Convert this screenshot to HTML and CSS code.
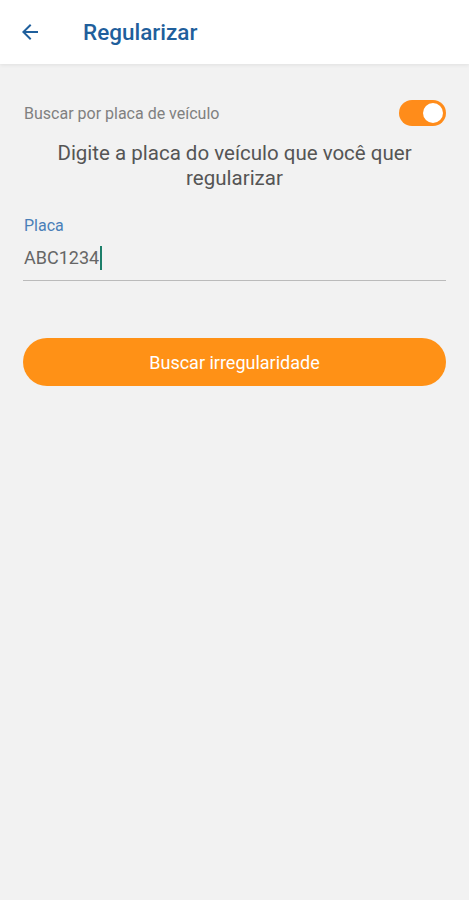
FILE: index.html
```html
<!DOCTYPE html>
<html lang="pt-BR">

<head>
    <meta charset="UTF-8">
    <meta name="viewport" content="width=device-width, initial-scale=1.0">
    <title>Regularizar</title>
    <link rel="stylesheet" href="styles.css">
</head>

<body>
    <header class="topbar">
        <button class="back-btn" aria-label="Voltar">
            <svg width="24" height="24" viewBox="0 0 24 24">
                <path d="M20 11H7.83l5.59-5.59L12 4l-8 8 8 8 1.41-1.41L7.83 13H20v-2z" fill="#1f5f9c"/>
            </svg>
        </button>
        <h1 class="title">Regularizar</h1>
    </header>

    <main class="content">
        <div class="switch-row">
            <span class="switch-label">Buscar por placa de veículo</span>
            <span class="switch on"><span class="thumb"></span></span>
        </div>
        <p class="instructions">Digite a placa do veículo que você quer regularizar</p>

        <div class="field">
            <label class="field-label" for="placa">Placa</label>
            <div class="field-value">ABC1234<span class="caret"></span></div>
        </div>

        <button class="primary-btn">Buscar irregularidade</button>
    </main>
</body>

</html>
```

FILE: styles.css
```css
body {
    font-family: Roboto, "Noto Sans", Arial, sans-serif;
    background-color: #f2f2f2;
    margin: 0;
    height: 100vh;
}

.topbar {
    background-color: #fff;
    height: 64px;
    display: flex;
    align-items: center;
    box-shadow: 0 1px 4px rgba(0, 0, 0, 0.08);
}

.back-btn {
    background: none;
    border: none;
    padding: 0;
    margin-left: 18px;
    width: 24px;
    height: 24px;
    display: flex;
}

.title {
    margin: 0 0 0 41px;
    font-size: 22.5px;
    font-weight: 500;
    color: #1f5f9c;
}

.content {
    padding: 0 23px;
}

.switch-row {
    display: flex;
    justify-content: space-between;
    align-items: center;
    margin-top: 36px;
    height: 26px;
}

.switch-label {
    font-size: 16px;
    color: #808080;
    padding-left: 1px;
}

.switch {
    width: 47px;
    height: 26px;
    border-radius: 13px;
    background-color: #ff8c1a;
    position: relative;
}

.switch .thumb {
    position: absolute;
    top: 3px;
    right: 3px;
    width: 20px;
    height: 20px;
    border-radius: 50%;
    background-color: #fff;
}

.instructions {
    margin: 14.5px 0 0;
    text-align: center;
    font-size: 20.5px;
    line-height: 25px;
    color: #555;
    padding: 0 6px;
}

.field {
    margin-top: 25.5px;
    border-bottom: 1.5px solid #bbb;
    padding-bottom: 9.5px;
}

.field-label {
    display: block;
    font-size: 16px;
    line-height: 20px;
    color: #4a7fb8;
    padding-left: 1px;
}

.field-value {
    margin-top: 10px;
    font-size: 18px;
    line-height: 24px;
    color: #666;
    display: flex;
    align-items: center;
    padding-left: 1px;
}

.caret {
    display: inline-block;
    width: 2px;
    height: 24px;
    background-color: #1d7f6a;
    margin-left: 1px;
}

.primary-btn {
    display: block;
    width: 100%;
    height: 48px;
    margin-top: 57.5px;
    border: none;
    border-radius: 24px;
    background-color: #ff9116;
    color: #fff;
    font-family: Roboto, "Noto Sans", Arial, sans-serif;
    font-size: 18px;
    cursor: pointer;
}
```
